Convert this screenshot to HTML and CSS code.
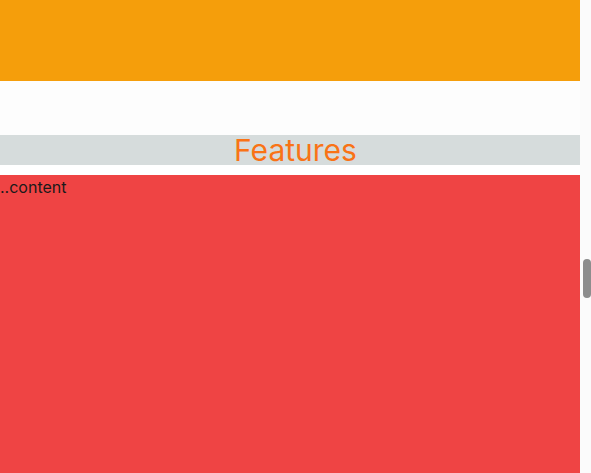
FILE: index.html
```html
<!DOCTYPE html>
<html lang="en">
<head>
<meta charset="utf-8">
<title>Features</title>
<link rel="stylesheet" href="styles.css">
</head>
<body>
<div class="window">
  <div class="page">
    <header class="hero"></header>
    <div class="spacer"></div>
    <section class="features">
      <h2 class="features-title">Features</h2>
    </section>
    <main class="content">..content</main>
  </div>
  <div class="scrollbar" aria-hidden="true">
    <div class="scrollbar-thumb"></div>
  </div>
</div>
</body>
</html>
```
FILE: styles.css
```css
html, body {
  margin: 0;
  padding: 0;
  height: 100%;
}
body {
  font-family: Inter, "Noto Sans", sans-serif;
  color: #1a1a1a;
  background: #ffffff;
  overflow: hidden;
}
.window {
  position: relative;
  height: 100vh;
}
.page {
  height: 100%;
  display: flex;
  flex-direction: column;
  overflow: hidden;
}
.hero {
  flex: none;
  height: 81px;
  background: #f59e0b;
}
.spacer {
  flex: none;
  height: 54px;
  background: #fdfdfd;
}
.features {
  flex: none;
  background: #d6dcdc;
  height: 30px;
  margin-bottom: 10px;
}
.features-title {
  margin: 0;
  text-align: center;
  font-weight: 400;
  font-size: 30px;
  line-height: 30px;
  color: #f97316;
}
.content {
  flex: 1;
  background: #ef4444;
  font-size: 16px;
  line-height: 24px;
}
.scrollbar {
  position: absolute;
  top: 0;
  right: 0;
  bottom: 0;
  width: 11px;
  background: #fbfbfb;
  padding: 259px 0 0 3px;
  box-sizing: border-box;
}
.scrollbar-thumb {
  width: 8px;
  height: 39px;
  background: #8d8d8d;
  border-radius: 4px;
}
```
